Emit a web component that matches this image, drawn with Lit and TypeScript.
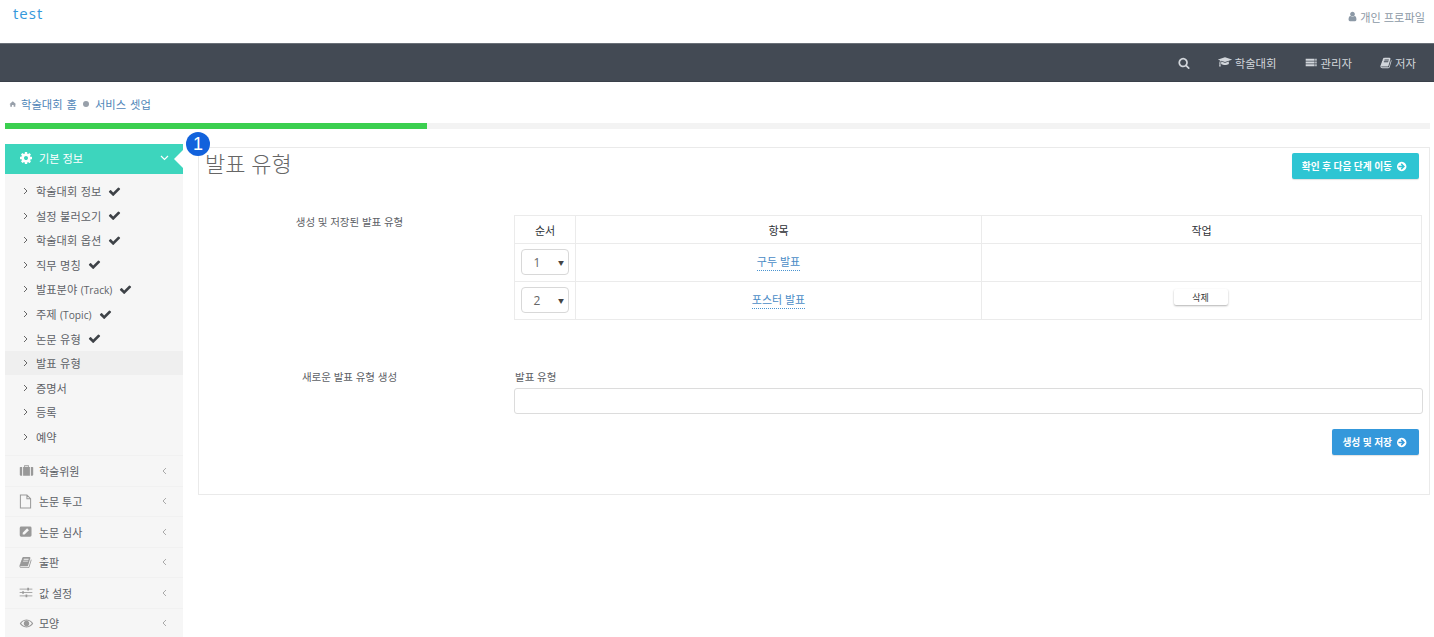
import { LitElement, html, css, svg } from "lit";
import { customElement } from "lit/decorators.js";

const FA: Record<string, string> = {
  check: "M1671 566q0 40-28 68l-724 724-136 136q-28 28-68 28t-68-28l-136-136-362-362q-28-28-28-68t28-68l136-136q28-28 68-28t68 28l294 295 656-657q28-28 68-28t68 28l136 136q28 28 28 68z",
  search: "M1216 832q0-185-131.5-316.5t-316.5-131.5-316.5 131.5-131.5 316.5 131.5 316.5 316.5 131.5 316.5-131.5 131.5-316.5zm512 832q0 52-38 90t-90 38q-54 0-90-38l-343-342q-179 124-399 124-143 0-273.5-55.5t-225-150-150-225-55.5-273.5 55.5-273.5 150-225 225-150 273.5-55.5 273.5 55.5 225 150 150 225 55.5 273.5q0 220-124 399l343 343q37 37 37 90z",
  user: "M1536 1399q0 109-62.5 187t-150.5 78h-854q-88 0-150.5-78t-62.5-187q0-85 8.5-160.5t31.5-152 58.5-131 94-89 134.5-34.5q131 128 313 128t313-128q76 0 134.5 34.5t94 89 58.5 131 31.5 152 8.5 160.5zm-256-887q0 159-112.5 271.5t-271.5 112.5-271.5-112.5-112.5-271.5 112.5-271.5 271.5-112.5 271.5 112.5 112.5 271.5z",
  cog: "M1152 896q0-106-75-181t-181-75-181 75-75 181 75 181 181 75 181-75 75-181zm512-109v222q0 12-8 23t-20 13l-185 28q-19 54-39 91 35 50 107 138 10 12 10 25t-9 23q-27 37-99 108t-94 71q-12 0-26-9l-138-108q-44 23-91 38-16 136-29 186-7 28-36 28h-222q-14 0-24.5-8.5t-11.5-21.5l-28-184q-49-16-90-37l-141 107q-10 9-25 9-14 0-25-11-126-114-165-168-7-10-7-23 0-12 8-23 15-21 51-66.5t54-70.5q-27-50-41-99l-183-27q-13-2-21-12.5t-8-23.5v-222q0-12 8-23t19-13l186-28q14-46 39-92-40-57-107-138-10-12-10-24 0-10 9-23 26-36 98.5-107.5t94.5-71.5q13 0 26 10l138 107q44-23 91-38 16-136 29-186 7-28 36-28h222q14 0 24.5 8.5t11.5 21.5l28 184q49 16 90 37l142-107q9-9 24-9 13 0 25 10 129 119 165 170 7 8 7 22 0 12-8 23-15 21-51 66.5t-54 70.5q26 50 41 98l183 28q13 2 21 12.5t8 23.5z",
  arrow: "M1285 897q0-27-18-45l-91-91-362-362q-18-18-45-18t-45 18l-91 91q-18 18-18 45t18 45l189 189h-502q-26 0-45 19t-19 45v128q0 26 19 45t45 19h502l-189 189q-19 19-19 45t19 45l91 91q18 18 45 18t45-18l362-362 91-91q18-18 18-45zm251-1q0 209-103 385.5t-279.5 279.5-385.5 103-385.5-103-279.5-279.5-103-385.5 103-385.5 279.5-279.5 385.5-103 385.5 103 279.5 279.5 103 385.5z",
  book: "M1703 478q40 57 18 129l-275 906q-19 64-76.500 107.500t-122.500 43.500h-923q-77 0-148.500-53.500t-99.500-131.500q-24-67-2-127 0-4 3-27t4-37q1-8-3-21.500t-3-19.500q2-11 8-21t16.500-23.500 16.500-23.500q23-38 45-91.500t30-91.500q3-10 .5-30t-.5-28q3-11 17-28t17-23q21-36 42-92t25-90q1-9-2.500-32t.5-28q4-13 22-30.500t22-22.500q19-26 42.500-84.500t27.500-96.500q1-8-3-25.500t-2-26.500q2-8 9-18t18-23 17-21q8-12 16.500-30.500t15-35 16-36 19.500-32 26.500-23.500 36-11.500 47.500 5.500l-1 3q38-9 51-9h761q74 0 114 56t18 130l-274 906q-36 119-71.500 153.500t-128.500 34.500h-869q-27 0-38 15-11 16-1 43 24 70 144 70h923q29 0 56-15.500t35-41.500l300-987q7-22 5-57 38 15 59 43zm-1064 2q-4 13 2 22.500t20 9.500h608q13 0 25.500-9.500t16.500-22.500l21-64q4-13-2-22.500t-20-9.500h-608q-13 0-25.500 9.500t-16.500 22.500zm-83 256q-4 13 2 22.500t20 9.500h608q13 0 25.500-9.500t16.500-22.500l21-64q4-13-2-22.500t-20-9.500h-608q-13 0-25.500 9.500t-16.500 22.500z",
  server: "M1 4h13v3H1zM15 4h2v3h-2z M1 8h13v3H1zM15 8h2v3h-2z M1 12h13v3H1zM15 12h2v3h-2z",
  brief: "M6.500 5V3h6v2h4.700q.8 0 .8 .8V15q0 1-1 1H2q-1 0-1-1V5.800q0-.8.8-.8ZM7.500 5h4V4h-4Z M4 5h1.200v11H4Z M13.800 5h1.200v11h-1.200Z",
  pencil: "M3 2h12q2 0 2 2v10q0 2-2 2H3q-2 0-2-2V4q0-2 2-2Z M5 13h2.500l6-6L11 4.500l-6 6Z",
  eye: "M9.500 4.500C5 4.500 2 7.500 1 9.500c1 2 4 5 8.500 5s7.500-3 8.500-5c-1-2-4-5-8.500-5Zm0 1.300c3 0 5.500 1.700 6.800 3.700-1.300 2-3.800 3.700-6.800 3.700s-5.500-1.700-6.800-3.700C4 7.500 6.500 5.800 9.500 5.800Z M9.500 6a3.500 3.500 0 1 0 .01 0Z",
  home: "M9 3 L17 10 L15 10 L15 16 L11 16 L11 12 L7 12 L7 16 L3 16 L3 10 L1 10 Z",
};
const CAP = "M1774 836l18 316q4 69-82 128t-235 93.500-323 34.500-323-34.500-235-93.500-82-128l18-316 574 181q22 7 48 7t48-7zm530-324q0 23-22 31l-1120 352q-4 1-10 1t-10-1l-652-206q-43 34-71 111.500t-34 178.500q63 36 63 109 0 69-58 107l58 433q2 14-8 25-9 11-24 11h-192q-15 0-24-11-10-11-8-25l58-433q-58-38-58-107 0-73 65-111 11-207 98-330l-333-104q-22-8-22-31t22-31l1120-352q4-1 10-1t10 1l1120 352q22 8 22 31z";

const fa = (name: string, size: number, cls = "") => html`<svg class="ic ${cls}" width=${size} height=${size} viewBox="0 0 1792 1792" fill="currentColor">${svg`<path d=${FA[name]}></path>`}</svg>`;
const si = (name: string, size: number, cls = "") => html`<svg class="ic ${cls}" width=${size} height=${size} viewBox="0 0 19 19" fill="currentColor" fill-rule="evenodd">${svg`<path d=${FA[name]}></path>`}</svg>`;
const capIcon = html`<svg class="ic" width="14" height="11" viewBox="0 100 2304 1790" fill="currentColor">${svg`<path d=${CAP}></path>`}</svg>`;
const fileIcon = html`<svg class="ic" width="13" height="15" viewBox="0 0 14 16" fill="none" stroke="currentColor" stroke-width="1.100"><path d="M1.500 1h7l4 4v10h-11z M8.500 1v4h4"></path></svg>`;
const sliders = html`<svg class="ic" width="14" height="11" viewBox="0 0 15 13" fill="none" stroke="currentColor" stroke-width="1"><path d="M0 2.500h15M0 6.500h15M0 10.500h15"></path><path stroke-width="2" d="M10 1v3M4 5v3M8 9v3"></path></svg>`;

const subItems: [string, boolean][] = [
  ["학술대회 정보", true], ["설정 불러오기", true], ["학술대회 옵션", true], ["직무 명칭", true],
  ["발표분야 (Track)", true], ["주제 (Topic)", true], ["논문 유형", true], ["발표 유형", false],
  ["증명서", false], ["등록", false], ["예약", false],
];
const groups = [
  ["학술위원", si("brief", 15)], ["논문 투고", fileIcon], ["논문 심사", si("pencil", 14)],
  ["출판", fa("book", 13)], ["값 설정", sliders], ["모양", si("eye", 15)],
] as const;

const PROGRESS = 422;

const label = (t: string) => {
  const m = t.match(/^(.*? )(\(.*\))$/);
  return m ? html`${m[1]}<span class="latin">${m[2]}</span>` : t;
};

@customElement("app-root")
export class AppRoot extends LitElement {
  static styles = css`
    :host { display: block; width: 1434px; height: 637px; overflow: hidden; background: #fff; font-family: "Open Sans", "Noto Sans CJK KR", sans-serif; font-size: 11px; color: #5d6166; position: relative; }
    * { box-sizing: border-box; }
    .ic { display: block; flex: none; }
    .top { height: 43px; display: flex; justify-content: space-between; padding: 3px 9px 0 13px; }
    .logo { font-size: 15px; line-height: 20px; letter-spacing: 1px; color: #3498db; }
    .profile { display: flex; align-items: center; gap: 2px; height: 17px; margin-top: 5px; font-size: 11.2px; color: #8c99a6; }
    .nav { height: 39px; background: #434a54; border-top: 1px solid #6a7078; border-bottom: 1px solid #3a404a; display: flex; justify-content: flex-end; align-items: center; padding-right: 18px; color: #d2d6db; font-size: 11.4px; }
    .nav span.item { display: flex; align-items: center; gap: 3px; margin-left: 28px; }
    .crumbs { height: 41px; display: flex; align-items: center; padding: 3px 0 0 9px; color: #4f86b8; font-size: 11.3px; word-spacing: 1px; }
    .crumbs .home { color: #98a0aa; margin-right: 4px; }
    .dot { width: 6px; height: 6px; border-radius: 50%; background: #98a0aa; margin: 0 6px; }
    .progress { height: 6px; margin: 0 4px 0 5px; background: #f3f3f3; }
    .progress div { height: 100%; background: #3bcf4f; }
    .body { display: flex; align-items: flex-start; gap: 15px; padding: 15px 5px 0; }
    .side { width: 178px; flex: none; background: #f6f6f6; }
    .side-head { height: 30px; background: #3dd5bd; color: #fff; display: flex; align-items: center; padding: 0 14px 2px 14px; gap: 6px; position: relative; font-size: 11.2px; }
    .side-head .grow { flex: 1; }
    .notch { position: absolute; right: 0; top: 6px; width: 0; height: 0; border: 9px solid transparent; border-right-color: #fff; border-left-width: 0; }
    .subs { padding: 5px 0 6px; }
    .sub { height: 24.55px; display: flex; align-items: center; padding-left: 18px; gap: 8px; color: #5d6166; font-size: 11.2px; word-spacing: .6px; }
    .sub.on { background: #efefef; }
    .sub .lbl { margin-left: 0; }
    .latin { font-size: 10.2px; }
    .sub .ok { color: #3e4247; margin-left: -1px; }
    .group { height: 30.5px; display: flex; align-items: center; padding-left: 13px; border-top: 1px solid #f1f1f1; color: #5d6166; }
    .group .slot { width: 21px; display: flex; justify-content: flex-start; color: #999; padding-left: 1px; }
    .group .lbl { flex: 1; }
    .group .chev { margin-right: 16px; color: #aaa; }
    .main { flex: none; width: 1232px; height: 348px; margin-top: 3px; border: 1px solid #eaeaea; padding: 0 10px 0 6px; position: relative; }
    .title-row { display: flex; justify-content: space-between; height: 67px; }
    h1 { margin: 0; font-size: 22px; font-weight: 300; line-height: 30px; color: #666; }
    .btn { display: inline-flex; align-items: center; gap: 5px; border: 0; color: #fff; font: inherit; font-size: 9.7px; font-weight: 700; border-radius: 2px; height: 26px; padding: 0 11px 0 10px; box-shadow: 0 1px 1px rgba(0,0,0,.12); }
    .btn.teal { background: #2ec5d3; margin-top: 5px; }
    .btn.blue { background: #3498db; }
    .row { display: flex; }
    .label { width: 309px; flex: none; text-align: center; padding-right: 20px; line-height: 14px; color: #5d6166; font-size: 10.5px; }
    .fields { flex: 1; }
    table { border-collapse: collapse; width: 908px; table-layout: fixed; }
    th, td { border: 1px solid #ebebeb; text-align: center; padding: 0; font-size: 11px; }
    th { height: 28px; font-weight: 400; color: #2e3136; }
    td { height: 38px; padding-bottom: 3px; }
    .sel { width: 48px; height: 26px; margin: 0 0 0 6px; border: 1px solid #d8d8d8; border-radius: 4px; display: flex; align-items: center; font-size: 12px; color: #666; position: relative; top: 1px; }
    .sel span { width: 30px; text-align: center; }
    .sel i { font-style: normal; font-size: 6px; color: #444; margin-left: 6px; }
    a { color: #4a8cc6; text-decoration: none; border-bottom: 1px dotted #4a94d0; padding-bottom: 1px; }
    .del { display: inline-flex; align-items: center; justify-content: center; width: 54px; height: 16px; font-size: 9px; font-weight: 400; color: #333; background: #fff; border-radius: 2px; box-shadow: 0 1px 2px rgba(0,0,0,.3); margin: 0 2px 4px 0; }
    .create { margin-top: 50px; }
    .field-label { height: 18px; line-height: 15px; font-size: 10.5px; padding-left: 1px; }
    .input { width: 909px; height: 26px; border: 1px solid #dcdcdc; border-radius: 3px; display: block; background: #fff; }
    .actions { width: 905px; display: flex; justify-content: flex-end; margin-top: 15px; }
    .badge { position: absolute; left: 186px; top: 132px; width: 24px; height: 24px; border-radius: 50%; background: #1262dc; color: #fff; font-size: 18px; line-height: 24px; text-align: center; font-family: "Liberation Sans", sans-serif; }
  `;

  render() {
    return html`
      <div class="top">
        <div class="logo">test</div>
        <div class="profile">${fa("user", 11)}개인 프로파일</div>
      </div>
      <div class="nav">
        <span class="item">${fa("search", 12)}</span>
        <span class="item">${capIcon}학술대회</span>
        <span class="item">${si("server", 13)}관리자</span>
        <span class="item">${fa("book", 12)}저자</span>
      </div>
      <div class="crumbs">
        <span class="home">${si("home", 8)}</span>학술대회 홈<span class="dot"></span>서비스 셋업
      </div>
      <div class="progress"><div style="width:${PROGRESS}px"></div></div>
      <div class="body">
        <div class="side">
          <div class="side-head">
            ${fa("cog", 14)}<span>기본 정보</span><span class="grow"></span>
            <svg class="ic" width="9" height="6" viewBox="0 0 9 6" fill="none" stroke="#fff" stroke-width="1.200"><path d="M1 1l3.500 3.500L8 1"></path></svg>
            <div class="notch"></div>
          </div>
          <div class="subs">
            ${subItems.map(([t, ok]) => html`
              <div class="sub ${t === "발표 유형" ? "on" : ""}">
                <svg class="ic" width="5" height="8" viewBox="0 0 5 8" fill="none" stroke="#666" stroke-width="1"><path d="M1 1l3 3-3 3"></path></svg>
                <span class="lbl">${label(t)}</span>${ok ? fa("check", 13, "ok") : ""}
              </div>`)}
          </div>
          ${groups.map(([t, icon]) => html`
            <div class="group">
              <span class="slot">${icon}</span><span class="lbl">${t}</span>
              <svg class="ic chev" width="5" height="8" viewBox="0 0 5 8" fill="none" stroke="currentColor" stroke-width="1"><path d="M4 1L1 4l3 3"></path></svg>
            </div>`)}
        </div>
        <div class="main">
          <div class="title-row">
            <h1>발표 유형</h1>
            <button class="btn teal">확인 후 다음 단계 이동 ${fa("arrow", 11)}</button>
          </div>
          <div class="row">
            <div class="label">생성 및 저장된 발표 유형</div>
            <div class="fields">
              <table>
                <colgroup><col style="width:61px"><col style="width:406px"><col></colgroup>
                <tr><th>순서</th><th>항목</th><th>작업</th></tr>
                <tr><td><div class="sel"><span>1</span><i>▼</i></div></td><td><a>구두 발표</a></td><td></td></tr>
                <tr><td><div class="sel"><span>2</span><i>▼</i></div></td><td><a>포스터 발표</a></td><td><span class="del">삭제</span></td></tr>
              </table>
            </div>
          </div>
          <div class="row create">
            <div class="label">새로운 발표 유형 생성</div>
            <div class="fields">
              <div class="field-label">발표 유형</div>
              <div class="input"></div>
              <div class="actions"><button class="btn blue">생성 및 저장 ${fa("arrow", 11)}</button></div>
            </div>
          </div>
        </div>
      </div>
      <div class="badge">1</div>
    `;
  }
}
